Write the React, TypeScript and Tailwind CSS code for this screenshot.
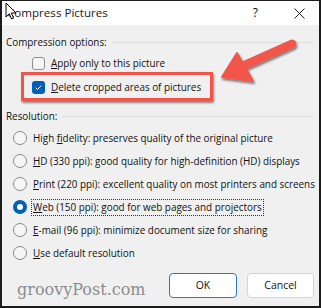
import React from "react";

const Checkbox = ({ checked }: { checked?: boolean }) =>
  checked ? (
    <span className="flex h-[13px] w-[13px] shrink-0 items-center justify-center rounded-[3px] bg-[#005fb8]">
      <svg width="9" height="9" viewBox="0 0 9 9">
        <path d="M1.8 4.8 L3.6 6.5 L7.2 2.6" fill="none" stroke="#fff" strokeWidth="1" />
      </svg>
    </span>
  ) : (
    <span className="h-[13px] w-[13px] shrink-0 rounded-[3px] border border-[#8f8f8f] bg-[#f6f6f6]" />
  );

const Radio = ({ checked }: { checked?: boolean }) =>
  checked ? (
    <span className="flex h-[14px] w-[14px] shrink-0 items-center justify-center rounded-full bg-[#005fb8]">
      <span className="h-[6px] w-[6px] rounded-full bg-white" />
    </span>
  ) : (
    <span className="h-[14px] w-[14px] shrink-0 rounded-full border border-[#8a8a8a] bg-[#f6f6f6]" />
  );

const SectionHeader = ({ label }: { label: string }) => (
  <div className="flex h-[18px] items-center gap-[5px] pr-[6px]">
    <span>{label}</span>
    <span className="h-px flex-1 bg-[#dcdcdc]" />
  </div>
);

const radios: { key: string; rest: string; checked?: boolean }[] = [
  { key: "", rest: "" },
  { key: "H", rest: "D (330 ppi): good quality for high-definition (HD) displays" },
  { key: "P", rest: "rint (220 ppi): excellent quality on most printers and screens" },
  { key: "W", rest: "eb (150 ppi): good for web pages and projectors", checked: true },
  { key: "E", rest: "-mail (96 ppi): minimize document size for sharing" },
  { key: "U", rest: "se default resolution" },
];

export default function App() {
  return (
    <div className="relative h-[308px] w-[321px] overflow-hidden whitespace-nowrap border-2 border-t border-[#1b1b1b] bg-[#f0f0f0] font-['Open_Sans',sans-serif] text-[9.9px] text-[#111]">
      {/* title bar */}
      <div className="flex h-[24px] items-center justify-between bg-white pl-[5px] pr-[14px]">
        <span className="text-[11.6px] text-[#1a1a1a]">Compress Pictures</span>
        <div className="flex items-center gap-[36px]">
          <span className="text-[12px]">?</span>
          <svg width="11" height="11" viewBox="0 0 11 11">
            <path d="M0.5 0.5 L10.5 10.5 M10.5 0.5 L0.5 10.5" stroke="#222" strokeWidth="1" />
          </svg>
        </div>
      </div>

      <div className="pl-[4px] pt-[8px]">
        <SectionHeader label="Compression options:" />
        <div className="mt-[3px] flex h-[18px] items-center gap-[6px] pl-[26px]">
          <Checkbox />
          <span>
            <u>A</u>pply only to this picture
          </span>
        </div>
        <div className="mt-[6px] flex h-[18px] items-center gap-[6px] pl-[26px]">
          <Checkbox checked />
          <span>
            <u>D</u>elete cropped areas of pictures
          </span>
        </div>

        <div className="mt-[11px]">
          <SectionHeader label="Resolution:" />
        </div>
        <div className="mt-[4px] flex flex-col gap-[5px] pl-[7px]">
          {radios.map((r, i) => (
            <div key={i} className="flex h-[18px] items-center gap-[4px]">
              <Radio checked={r.checked} />
              <span
                className={
                  r.checked
                    ? "border border-dotted border-[#333] px-[1px] leading-[15px]"
                    : "px-[2px]"
                }
              >
                {i === 0 ? (
                  <>
                    High <u>f</u>idelity: preserves quality of the original picture
                  </>
                ) : (
                  <>
                    <u>{r.key}</u>
                    {r.rest}
                  </>
                )}
              </span>
            </div>
          ))}
        </div>
      </div>

      {/* bottom row */}
      <div className="absolute bottom-[8px] left-0 right-0 flex items-end justify-between pl-[15px] pr-[5px]">
        <span className="mb-[-4px] font-['DejaVu_Serif',serif] text-[16px] text-[#8c8c8c]">groovyPost.com</span>
        <div className="flex gap-[10px]">
          <button className="h-[25px] w-[68px] rounded-[4px] border border-[#2f79c6] bg-white text-[10.5px]">OK</button>
          <button className="h-[25px] w-[67px] rounded-[4px] border border-[#d4d4d4] bg-white text-[10.5px]">Cancel</button>
        </div>
      </div>

      {/* annotation: red box */}
      <div className="pointer-events-none absolute left-[19px] top-[71px] h-[29px] w-[192px] border-[3px] border-[#f0544a] shadow-[1px_2px_2px_rgba(0,0,0,0.45)]" />

      {/* annotation: arrow */}
      <svg className="pointer-events-none absolute left-0 top-0" width="321" height="308">
        <defs>
          <filter id="sh" x="-20%" y="-20%" width="140%" height="140%">
            <feDropShadow dx="1" dy="2" stdDeviation="1.2" floodColor="#000" floodOpacity="0.5" />
          </filter>
        </defs>
        <g filter="url(#sh)" fill="#f2564b" stroke="#f2564b" strokeLinejoin="round">
          <path d="M290 43 L243 64" strokeWidth="9" strokeLinecap="round" fill="none" />
          <path d="M220 76 L235 52 L251 80 Z" strokeWidth="2" />
        </g>
      </svg>

      {/* mouse cursor */}
      <svg className="pointer-events-none absolute left-[3px] top-[1px]" width="13" height="19" viewBox="0 0 13 19">
        <path
          d="M1 1 L1 15 L4.3 11.8 L6.6 17 L8.6 16.1 L6.4 11 L11 11 Z"
          fill="#fff"
          stroke="#000"
          strokeWidth="1"
          strokeLinejoin="round"
        />
      </svg>
    </div>
  );
}
